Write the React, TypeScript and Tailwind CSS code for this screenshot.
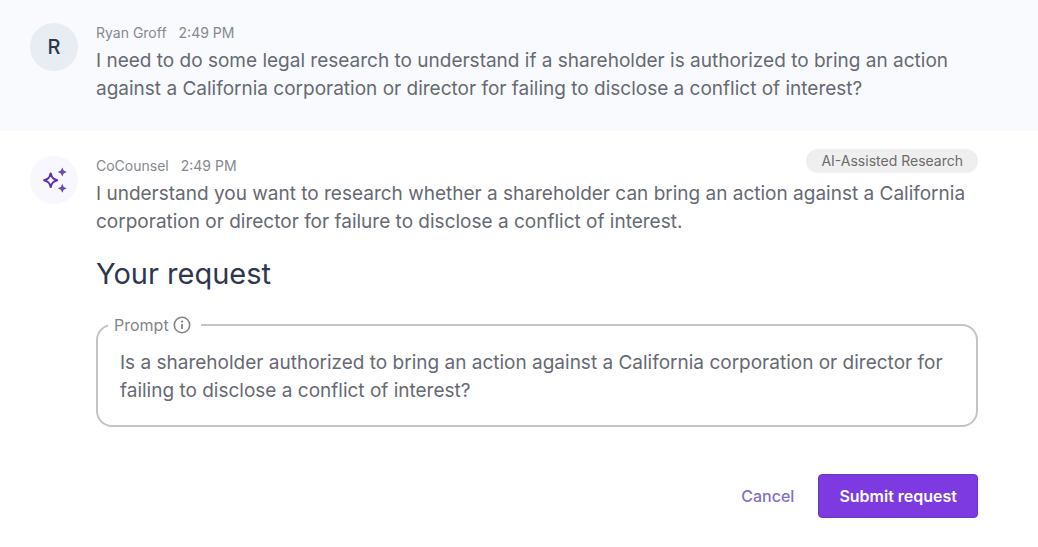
import type { ReactNode } from "react";

function Sparkles() {
  return (
    <svg viewBox="0 0 28 28" className="size-7" aria-hidden="true">
      <path
        d="M10.7 7.5 C11.6 11.5 12.9 13 17.2 14.2 C12.9 15.4 11.6 17 10.7 21 C9.8 17 8.5 15.4 4.2 14.2 C8.5 13 9.8 11.5 10.7 7.5Z"
        fill="none"
        stroke="#5b34b5"
        strokeWidth="2.2"
        strokeLinejoin="round"
      />
      <path d="M22.3 1.5 L23.7 4.6 L26.8 6 L23.7 7.4 L22.3 10.5 L20.9 7.4 L17.8 6 L20.9 4.6Z" fill="#6a4bb0" />
      <path d="M22.3 17.8 L23.7 20.9 L26.8 22.3 L23.7 23.7 L22.3 26.8 L20.9 23.7 L17.8 22.3 L20.9 20.9Z" fill="#6a4bb0" />
    </svg>
  );
}

function InfoIcon() {
  return (
    <svg viewBox="0 0 18 18" className="size-[18px]" aria-hidden="true">
      <circle cx="9" cy="9" r="7.7" fill="none" stroke="#858585" strokeWidth="1.6" />
      <path d="M9 8v5" stroke="#858585" strokeWidth="1.8" />
      <circle cx="9" cy="5.6" r="1.1" fill="#858585" />
    </svg>
  );
}

function Avatar({ children, className }: { children: ReactNode; className: string }) {
  return (
    <div className={`flex size-12 shrink-0 items-center justify-center rounded-full ${className}`}>
      {children}
    </div>
  );
}

function Meta({ name, time }: { name: string; time: string }) {
  return (
    <div className="flex gap-3 text-sm leading-5 text-[#85898f]">
      <span>{name}</span>
      <time>{time}</time>
    </div>
  );
}

export default function App() {
  return (
    <main className="min-h-screen bg-white font-['Inter',sans-serif] text-[#666a72]">
      <section className="flex gap-[18px] bg-[#f9fafd] pt-[23px] pr-[60px] pb-7 pl-[30px]">
        <Avatar className="bg-[#e8ecf3] text-xl font-medium text-[#2c3850]">R</Avatar>
        <div className="min-w-0 flex-1">
          <Meta name="Ryan Groff" time="2:49 PM" />
          <p className="mt-1 text-[19px] leading-7">
            I need to do some legal research to understand if a shareholder is authorized to bring an action against a
            California corporation or director for failing to disclose a conflict of interest?
          </p>
        </div>
      </section>

      <section className="flex gap-[18px] pt-[25px] pr-[60px] pb-7 pl-[30px]">
        <Avatar className="bg-[#f8f7fe]">
          <Sparkles />
        </Avatar>
        <div className="min-w-0 flex-1">
          <div className="flex h-5 items-center justify-between">
            <Meta name="CoCounsel" time="2:49 PM" />
            <span className="mb-2.5 rounded-full bg-[#efefef] px-[15px] text-sm leading-6 text-[#6b6b6b]">
              AI-Assisted Research
            </span>
          </div>
          <p className="mt-1 text-[19px] leading-7">
            I understand you want to research whether a shareholder can bring an action against a California corporation
            or director for failure to disclose a conflict of interest.
          </p>

          <form onSubmit={(e) => e.preventDefault()}>
            <h2 className="mt-5 text-[29px] leading-9 text-[#2c3850]">Your request</h2>
            <fieldset className="mt-[23px] rounded-2xl border-2 border-[#c4c4c4] px-[22px] pb-5">
              <legend className="-ml-3 flex h-5 items-center gap-1 pr-2.5 pl-1.5 text-base leading-5 text-[#858585]">
                <label htmlFor="prompt">Prompt</label>
                <InfoIcon />
              </legend>
              <textarea
                id="prompt"
                rows={2}
                className="mt-3.5 block w-full resize-none overflow-hidden bg-transparent text-[19px] leading-7 outline-none"
                defaultValue="Is a shareholder authorized to bring an action against a California corporation or director for failing to disclose a conflict of interest?"
              />
            </fieldset>
            <div className="mt-[47px] flex justify-end gap-6">
              <button type="button" className="text-base font-medium text-[#8670c4]">
                Cancel
              </button>
              <button
                type="submit"
                className="h-11 rounded border border-[#6a35c9] bg-[#7c3ae0] px-5 text-base font-semibold text-white"
              >
                Submit request
              </button>
            </div>
          </form>
        </div>
      </section>
    </main>
  );
}
